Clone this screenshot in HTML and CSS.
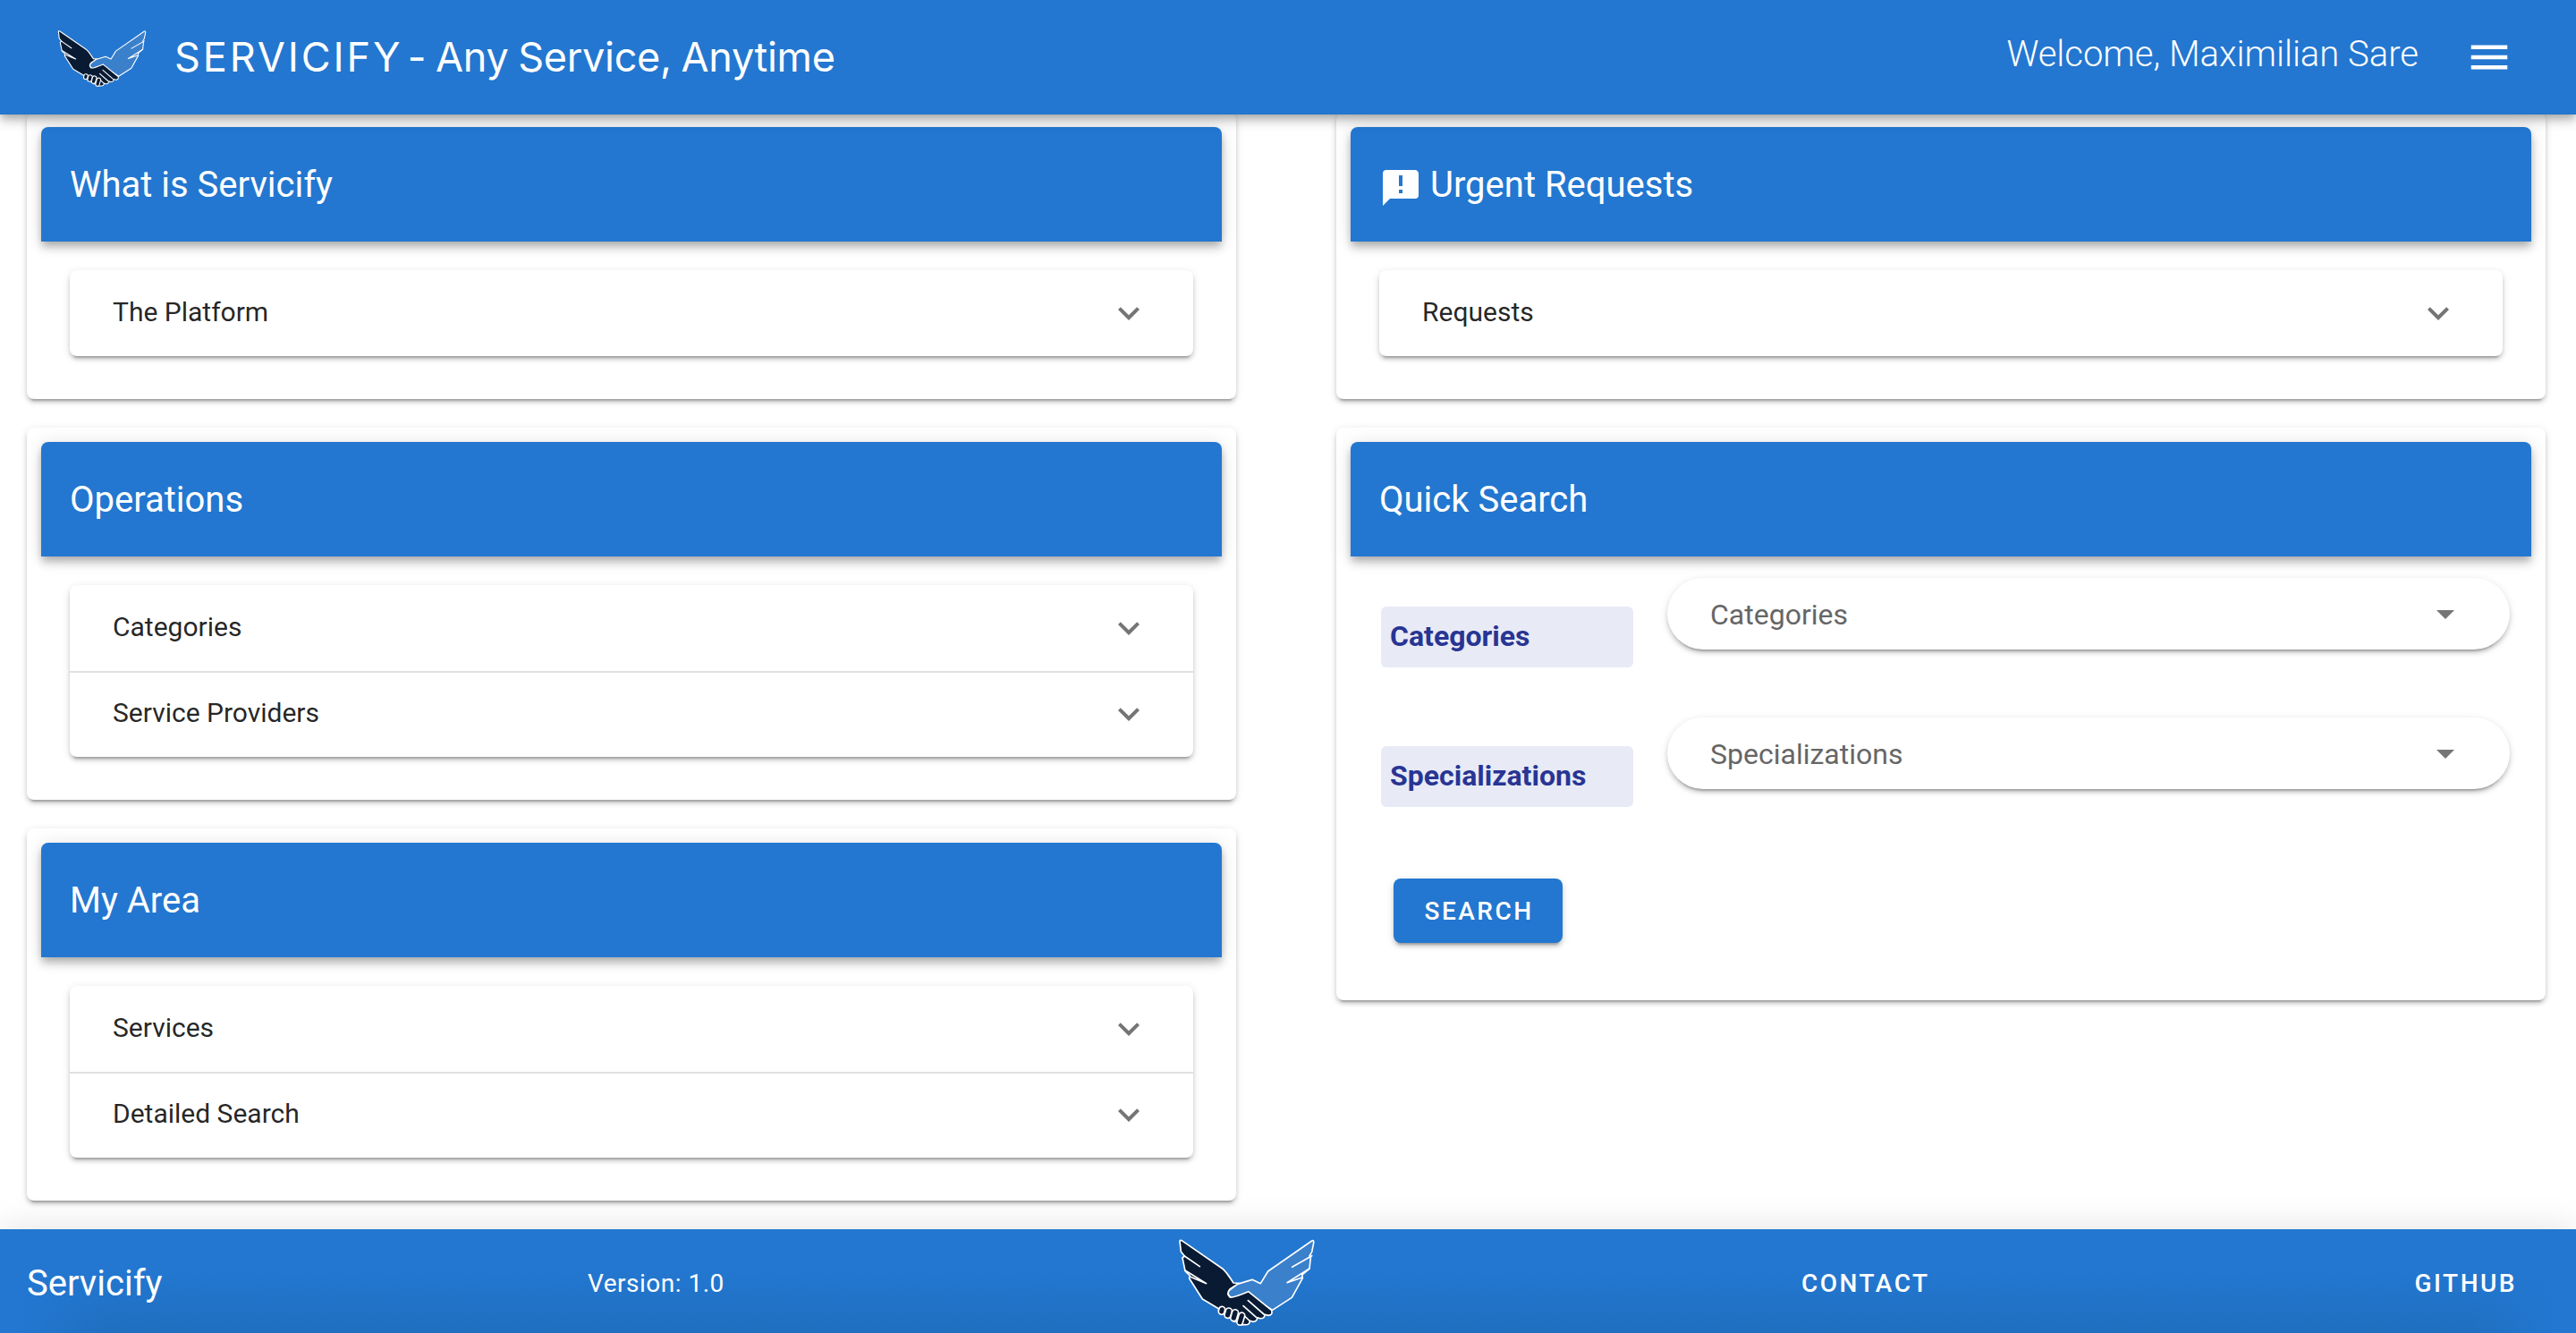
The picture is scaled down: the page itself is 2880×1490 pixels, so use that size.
FILE: index.html
```html
<!DOCTYPE html>
<html lang="en">
<head>
<meta charset="utf-8">
<title>Servicify</title>
<link rel="stylesheet" href="styles.css">
</head>
<body>
<svg class="defs" width="0" height="0" aria-hidden="true">
  <defs>
    <symbol id="chevron" viewBox="0 0 24 24"><path d="M7.41,8.58L12,13.17L16.59,8.58L18,10L12,16L6,10L7.41,8.58Z"/></symbol>
    <symbol id="caret" viewBox="0 0 24 24"><path d="M7,10L12,15L17,10H7Z"/></symbol>
    <symbol id="menu" viewBox="0 0 24 24"><path d="M3,6H21V8H3V6M3,11H21V13H3V11M3,16H21V18H3V16Z"/></symbol>
    <symbol id="alert" viewBox="0 0 24 24"><path d="M13,11H11V5H13M13,15H11V13H13M20,2H4A2,2 0 0,0 2,4V22L6,18H20A2,2 0 0,0 22,16V4C22,2.89 21.1,2 20,2Z"/></symbol>
    <symbol id="wings" viewBox="0 0 600 360">
      <g stroke="#fff" stroke-width="5" stroke-linejoin="round" stroke-linecap="round">
        <path fill="#3b80cb" d="M328 194L353 153L500 51Q507 47 506 58L500 88L492 102L496 106L492 144L467 165L469 176L433 241L368 283L300 240L230 242Q212 228 224 216L250 196L300 181Z"/>
        <path fill="#091a33" d="M57 52Q59 46 68 53L200 144Q212 153 237 192L255 193Q240 203 225 213Q212 228 225 240Q235 243 287 221L365 284Q370 299 355 301L342 298Q342 313 326 311L318 308Q315 324 301 322L292 319Q292 334 276 332L264 333Q250 335 250 321Q232 326 230 309Q210 310 208 296Q186 296 187 278L133 246L89 177L91 168L75 152L66 108L73 102L61 87Z"/>
        <path fill="none" d="M73 102L124 137M75 150L146 194L93 172M500 101L434 139M492 144L417 191L467 174M286 251L339 297M270 269L314 308M272 301L290 318"/>
        <g fill="#091a33">
          <rect x="188" y="271" width="20" height="27" rx="10" transform="rotate(14 198 284)"/>
          <rect x="209" y="276" width="21" height="34" rx="10" transform="rotate(16 219 293)"/>
          <rect x="230" y="281" width="21" height="39" rx="10" transform="rotate(16 240 300)"/>
          <rect x="252" y="291" width="20" height="43" rx="10" transform="rotate(16 262 312)"/>
        </g>
      </g>
    </symbol>
  </defs>
</svg>

<header class="app-bar">
  <svg class="app-logo"><use href="#wings"/></svg>
  <h1 class="app-title"><span class="brand">SERVICIFY</span> - Any Service, Anytime</h1>
  <span class="welcome">Welcome, Maximilian Sare</span>
  <svg class="menu-icon"><use href="#menu"/></svg>
</header>

<main class="content">
  <div class="column">
    <section class="card">
      <h2 class="card-header">What is Servicify</h2>
      <div class="panels">
        <div class="panel"><span>The Platform</span><svg class="chevron"><use href="#chevron"/></svg></div>
      </div>
    </section>
    <section class="card">
      <h2 class="card-header">Operations</h2>
      <div class="panels">
        <div class="panel"><span>Categories</span><svg class="chevron"><use href="#chevron"/></svg></div>
        <div class="panel"><span>Service Providers</span><svg class="chevron"><use href="#chevron"/></svg></div>
      </div>
    </section>
    <section class="card">
      <h2 class="card-header">My Area</h2>
      <div class="panels">
        <div class="panel"><span>Services</span><svg class="chevron"><use href="#chevron"/></svg></div>
        <div class="panel"><span>Detailed Search</span><svg class="chevron"><use href="#chevron"/></svg></div>
      </div>
    </section>
  </div>
  <div class="column">
    <section class="card">
      <h2 class="card-header"><svg class="alert-icon"><use href="#alert"/></svg>Urgent Requests</h2>
      <div class="panels">
        <div class="panel"><span>Requests</span><svg class="chevron"><use href="#chevron"/></svg></div>
      </div>
    </section>
    <section class="card search-card">
      <h2 class="card-header">Quick Search</h2>
      <div class="search-row">
        <span class="label">Categories</span>
        <div class="select"><span>Categories</span><svg class="caret"><use href="#caret"/></svg></div>
      </div>
      <div class="search-row">
        <span class="label">Specializations</span>
        <div class="select"><span>Specializations</span><svg class="caret"><use href="#caret"/></svg></div>
      </div>
      <button class="search-button">SEARCH</button>
    </section>
  </div>
</main>

<footer class="footer">
  <span class="footer-name">Servicify</span>
  <span class="footer-version">Version: 1.0</span>
  <svg class="footer-logo"><use href="#wings"/></svg>
  <a class="footer-link">CONTACT</a>
  <a class="footer-link">GITHUB</a>
</footer>
</body>
</html>
```
FILE: styles.css
```css
* { box-sizing: border-box; }
body {
  margin: 0;
  height: 1490px;
  display: flex;
  flex-direction: column;
  overflow: hidden;
  background: #fff;
  color: rgba(0, 0, 0, 0.87);
  font-family: Roboto, "Liberation Sans", sans-serif;
}
.defs { position: absolute; }
svg { fill: currentColor; flex: none; }
h1, h2 { margin: 0; font-weight: 400; }

.app-bar {
  position: relative;
  z-index: 2;
  flex: none;
  height: 128px;
  display: flex;
  align-items: center;
  padding: 0 70px 0 53px;
  background: #2377d0;
  color: #fff;
  box-shadow: 0 4px 8px -2px rgba(0,0,0,.2), 0 8px 10px rgba(0,0,0,.14), 0 2px 20px rgba(0,0,0,.12);
}
.app-logo { width: 130px; height: 78px; margin-top: -3px; }
.app-title {
  margin: -2px 0 0 12px;
  font-family: Inter, Roboto, sans-serif;
  font-size: 45px;
  letter-spacing: -.3px;
  word-spacing: -1.5px;
  white-space: nowrap;
}
.brand { margin-right: -5.5px; letter-spacing: 2.9px; }
.welcome { margin: -7px 52px 0 auto; font-size: 40px; font-weight: 300; line-height: 56px; white-space: nowrap; }
.menu-icon { width: 54px; height: 54px; }

.content { flex: none; height: 1246px; display: grid; grid-template-columns: 1352px 1352px; gap: 112px; padding-left: 30px; }
.column { display: flex; flex-direction: column; gap: 32px; margin-top: -2px; }
.card {
  padding: 16px 16px 48px;
  border-radius: 8px;
  background: #fff;
  box-shadow: 0 6px 2px -4px rgba(0,0,0,.2), 0 4px 4px rgba(0,0,0,.14), 0 2px 10px rgba(0,0,0,.12);
}
.card-header {
  height: 128px;
  padding: 0 32px;
  display: flex;
  align-items: center;
  border-radius: 8px 8px 0 0;
  background: #2377d0;
  color: #fff;
  font-size: 40px;
  box-shadow: 0 4px 8px -2px rgba(0,0,0,.2), 0 8px 10px rgba(0,0,0,.14), 0 2px 20px rgba(0,0,0,.12);
}
.alert-icon { width: 48px; height: 48px; margin: 8px 9px 0 0; }
.panels {
  margin: 32px 32px 0;
  border-radius: 8px;
  box-shadow: 0 6px 2px -4px rgba(0,0,0,.2), 0 4px 4px rgba(0,0,0,.14), 0 2px 10px rgba(0,0,0,.12);
}
.panel { height: 96px; padding: 0 48px; display: flex; align-items: center; justify-content: space-between; font-size: 30px; }
.panel > span { margin-top: -3px; }
.panel + .panel { box-shadow: inset 0 2px rgba(0,0,0,.12); }
.chevron { width: 48px; height: 48px; color: #757575; }

.search-card { height: 640px; }
.search-row { display: flex; justify-content: space-between; height: 156px; padding: 24px 24px 0 34px; }
.label {
  width: 282px;
  height: 68px;
  margin-top: 32px;
  padding-left: 10px;
  border-radius: 6px;
  background: #e8eaf6;
  color: #283593;
  font-size: 32px;
  font-weight: 700;
  line-height: 66px;
}
.select {
  width: 942px;
  height: 80px;
  padding: 0 48px;
  display: flex;
  align-items: center;
  justify-content: space-between;
  border-radius: 40px;
  color: #666;
  font-size: 32px;
  box-shadow: 0 6px 2px -4px rgba(0,0,0,.2), 0 4px 4px rgba(0,0,0,.14), 0 2px 10px rgba(0,0,0,.12);
}
.select > span { margin-top: 2px; }
.caret { width: 48px; height: 48px; color: #757575; }
.search-button {
  display: block;
  width: 189px;
  height: 72px;
  margin: 48px 0 0 48px;
  padding: 0 0 0 2px;
  border: 0;
  border-radius: 8px;
  background: #2377d0;
  color: #fff;
  font: 500 28px Roboto, sans-serif;
  letter-spacing: 2.5px;
  box-shadow: 0 6px 2px -4px rgba(0,0,0,.2), 0 4px 4px rgba(0,0,0,.14), 0 2px 10px rgba(0,0,0,.12);
}

.footer {
  position: relative;
  z-index: 1;
  height: 116px;
  display: grid;
  grid-template-columns: 627px 661px 696px 1fr auto;
  grid-template-rows: 112px;
  align-items: center;
  padding: 4px 66px 0 30px;
  background:
    linear-gradient(to right, #2377d0 20px, rgba(35,119,208,0) 120px, rgba(35,119,208,0) calc(100% - 120px), #2377d0 calc(100% - 20px)),
    linear-gradient(#2377d0 40%, #1f6fc0);
  color: #fff;
  box-shadow: 0 0 40px rgba(0,0,0,.12);
}
.footer-name { font-size: 40px; }
.footer-version { font-size: 28px; letter-spacing: .5px; }
.footer-logo { width: 200px; height: 120px; margin: -8px 0 0 -18px; }
.footer-link { font-size: 28px; font-weight: 500; letter-spacing: 2.5px; }
```
